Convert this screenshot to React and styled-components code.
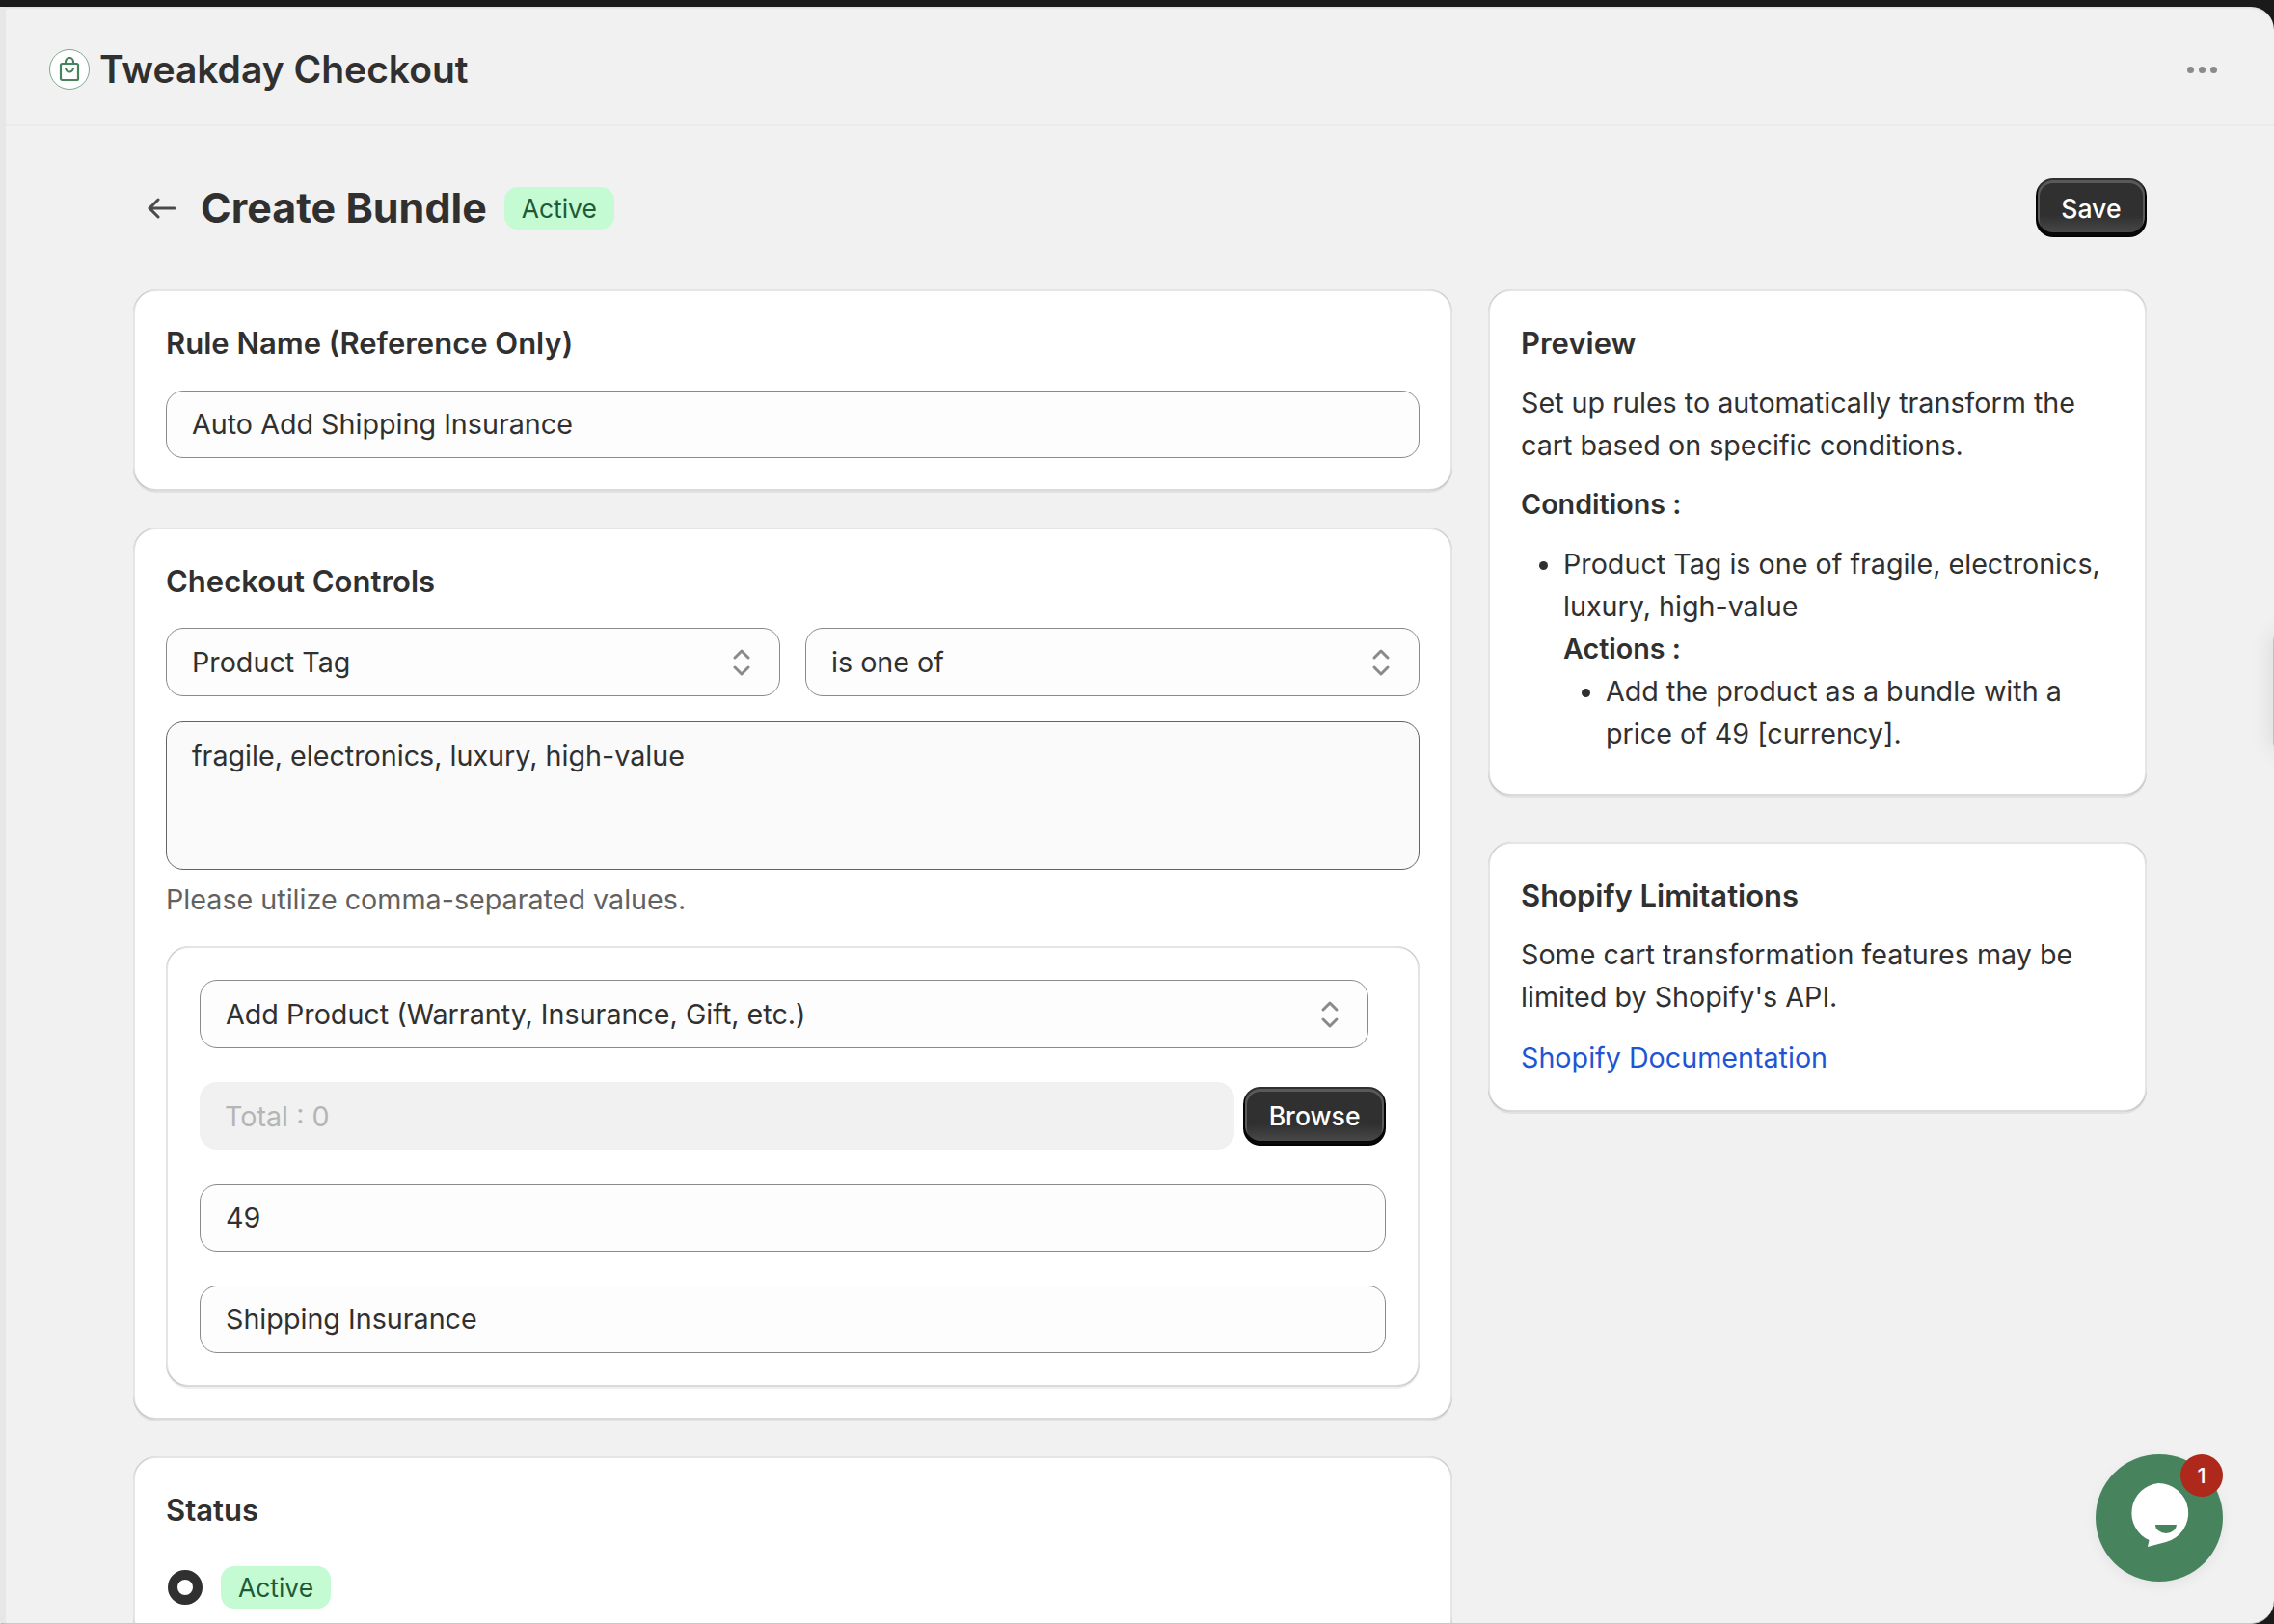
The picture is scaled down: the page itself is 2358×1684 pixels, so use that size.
import React from "react";
import styled, { createGlobalStyle } from "styled-components";

const GlobalStyle = createGlobalStyle`
  html, body {
    margin: 0;
    height: 100%;
    overflow: hidden;
    background: #1a1a1a;
  }
  #root {
    height: 100%;
  }
`;

const Frame = styled.div`
  height: 100vh;
  box-sizing: border-box;
  padding-top: 7px;
  display: flex;
  flex-direction: column;
  font-family: "Inter", "Liberation Sans", sans-serif;
  color: #303030;
`;

const AppWindow = styled.div`
  position: relative;
  flex: 1;
  min-height: 0;
  overflow: hidden;
  background: #f1f1f1;
  border-radius: 0 24px 24px 0;
  border-left: 6px solid #e7e7e7;
  border-bottom: 1px solid #c9c9c9;
  box-shadow: inset 0 3px 3px -2px rgba(0, 0, 0, 0.1);
`;

const TopBar = styled.header`
  height: 124px;
  box-sizing: border-box;
  padding: 8px 59px 0 45px;
  display: flex;
  align-items: center;
  justify-content: space-between;
  border-bottom: 2px solid #ebebeb;
`;

const Brand = styled.div`
  display: flex;
  align-items: center;
  gap: 10px;
`;

const BrandName = styled.h1`
  margin: 0;
  font-size: 39px;
  line-height: 48px;
  font-weight: 600;
`;

const LogoCircle = styled.div`
  width: 42px;
  height: 42px;
  box-sizing: border-box;
  border-radius: 50%;
  background: #ffffff;
  border: 1px solid #7fa98f;
  display: flex;
  align-items: center;
  justify-content: center;
`;

const Dots = styled.div`
  display: flex;
  gap: 5px;
`;

const Dot = styled.span`
  width: 7px;
  height: 7px;
  border-radius: 50%;
  background: #8a8a8a;
`;

const Page = styled.main`
  width: 2088px;
  margin-left: 132px;
`;

const PageHeader = styled.div`
  height: 169px;
  display: flex;
  align-items: center;
  justify-content: space-between;
`;

const TitleGroup = styled.div`
  display: flex;
  align-items: center;
  margin-left: 15px;
`;

const BackArrow = styled.svg`
  width: 30px;
  height: 30px;
  margin-right: 25px;
`;

const PageTitle = styled.h2`
  margin: 0 18px 2px 0;
  font-size: 43px;
  line-height: 56px;
  font-weight: 700;
`;

const Badge = styled.span`
  display: inline-flex;
  align-items: center;
  height: 44px;
  padding: 0 18px;
  border-radius: 14px;
  background: #c5fbd3;
  color: #1f5a37;
  font-size: 26.4px;
  font-weight: 400;
`;

const DarkButton = styled.button`
  height: 61px;
  padding: 0 26.5px;
  border: none;
  border-radius: 18px;
  font-family: inherit;
  font-size: 26.6px;
  font-weight: 500;
  color: #ffffff;
  background: linear-gradient(180deg, rgba(48, 48, 48, 0) 63%, rgba(255, 255, 255, 0.15) 100%), #303030;
  box-shadow: inset 0 -3px 0 2px rgba(0, 0, 0, 0.9), inset 0 0 0 2px #303030, inset 0 1px 0 4px rgba(255, 255, 255, 0.2);
`;

const Columns = styled.div`
  display: grid;
  grid-template-columns: 1368px 683px;
  gap: 37px;
  align-items: start;
`;

const Column = styled.div`
  display: flex;
  flex-direction: column;
  gap: ${(p) => p.$gap}px;
`;

const Card = styled.section`
  background: #ffffff;
  border-radius: 24px;
  padding: ${(p) => p.$pad || "34px"};
  box-shadow: 0 2px 0 rgba(26, 26, 26, 0.07), inset 2px 0 0 rgba(0, 0, 0, 0.1), inset -2px 0 0 rgba(0, 0, 0, 0.1), inset 0 -2px 0 rgba(0, 0, 0, 0.14), inset 0 2px 0 rgba(204, 204, 204, 0.5);
`;

const InnerCard = styled(Card)`
  margin-top: 26px;
  padding: 35px 35px 35.5px;
  display: flex;
  flex-direction: column;
  gap: 35.3px;
`;

const CardTitle = styled.h3`
  margin: 0 0 ${(p) => p.$mb ?? 26.5}px;
  font-size: 31px;
  line-height: 44px;
  font-weight: 600;
`;

const Field = styled.div`
  height: 70px;
  box-sizing: border-box;
  padding: 0 26px;
  display: flex;
  align-items: center;
  justify-content: space-between;
  font-size: 28.7px;
  border: 1.5px solid #8a8a8a;
  border-radius: 18px;
  background: #fdfdfd;
`;

const SelectRow = styled.div`
  display: grid;
  grid-template-columns: 1fr 1fr;
  gap: 26px;
`;

const SelectField = styled(Field)`
  height: 71px;
  padding-right: 29px;
  margin-right: ${(p) => p.$mr || 0}px;
`;

const TextArea = styled(Field)`
  margin-top: 26px;
  height: 154px;
  padding-top: 13px;
  align-items: flex-start;
  line-height: 44px;
  background: #fafafa;
  border-color: #646464;
`;

const HelpText = styled.p`
  margin: 9px 0 0;
  font-size: 28.7px;
  line-height: 44px;
  color: #616161;
`;

const BrowseRow = styled.div`
  display: flex;
  align-items: center;
  gap: 9px;
`;

const DisabledField = styled.div`
  flex: 1;
  height: 70px;
  box-sizing: border-box;
  padding: 0 26px;
  display: flex;
  align-items: center;
  font-size: 28.7px;
  color: #b5b5b5;
  background: #f1f1f1;
  border-radius: 18px;
`;

const StatusRow = styled.div`
  display: flex;
  align-items: center;
  gap: 19px;
  margin-left: 2px;
`;

const Radio = styled.span`
  width: 36px;
  height: 36px;
  box-sizing: border-box;
  border-radius: 50%;
  border: 10px solid #303030;
  background: #ffffff;
`;

const BodyText = styled.p`
  margin: 0 0 ${(p) => p.$mb || 0}px;
  font-size: 28.7px;
  line-height: 44px;
  font-weight: ${(p) => (p.$bold ? 620 : 400)};
`;

const BulletList = styled.ul`
  margin: 0;
  padding-left: 44px;
  font-size: 28.7px;
  line-height: 44px;
  list-style: disc;
`;

const DocLink = styled.a`
  display: block;
  margin-top: 19px;
  font-size: 28.7px;
  line-height: 44px;
  color: #1f55d3;
  text-decoration: none;
`;

const ChatButton = styled.div`
  position: absolute;
  right: 53px;
  bottom: 43px;
  width: 132px;
  height: 132px;
  border-radius: 50%;
  background: #47845e;
  display: flex;
  align-items: center;
  justify-content: center;
  box-shadow: 0 4px 14px rgba(0, 0, 0, 0.06);
`;

const ChatCount = styled.span`
  position: absolute;
  top: 0;
  right: 0;
  width: 44px;
  height: 44px;
  border-radius: 50%;
  background: #ae281c;
  color: #ffffff;
  font-size: 22px;
  font-weight: 500;
  display: flex;
  align-items: center;
  justify-content: center;
`;

const EdgeGlow = styled.div`
  position: absolute;
  right: -19px;
  top: 648px;
  width: 20px;
  height: 125px;
  border-radius: 14px;
  background: rgba(0, 0, 0, 0.2);
  box-shadow: 0 0 24px rgba(0, 0, 0, 0.12);
`;

const Chevrons = () => (
  <svg width="20" height="30" viewBox="0 0 20 30" fill="none" stroke="#8a8a8a" strokeWidth="3" strokeLinecap="round" strokeLinejoin="round">
    <path d="M3 10 L10 3 L17 10" />
    <path d="M3 20 L10 27 L17 20" />
  </svg>
);

export default function App() {
  return (
    <>
      <GlobalStyle />
      <Frame>
        <AppWindow>
          <TopBar>
            <Brand>
              <LogoCircle>
                <svg width="22" height="26" viewBox="0 0 22 26" fill="none" stroke="#47845e" strokeWidth="2.2">
                  <rect x="2" y="7" width="18" height="17" rx="1.5" />
                  <path d="M7 7 V5 a4 4 0 0 1 8 0 V7" />
                  <path d="M7 11 a4 4.5 0 0 0 8 0" />
                </svg>
              </LogoCircle>
              <BrandName>Tweakday Checkout</BrandName>
            </Brand>
            <Dots>
              <Dot />
              <Dot />
              <Dot />
            </Dots>
          </TopBar>
          <Page>
            <PageHeader>
              <TitleGroup>
                <BackArrow viewBox="0 0 30 30" fill="none" stroke="#4a4a4a" strokeWidth="3" strokeLinecap="round" strokeLinejoin="round">
                  <path d="M28 15 H2 M11 6 L2 15 L11 24" />
                </BackArrow>
                <PageTitle>Create Bundle</PageTitle>
                <Badge>Active</Badge>
              </TitleGroup>
              <DarkButton>Save</DarkButton>
            </PageHeader>
            <Columns>
              <Column $gap={38}>
                <Card>
                  <CardTitle>Rule Name (Reference Only)</CardTitle>
                  <Field>Auto Add Shipping Insurance</Field>
                </Card>
                <Card>
                  <CardTitle>Checkout Controls</CardTitle>
                  <SelectRow>
                    <SelectField>Product Tag<Chevrons /></SelectField>
                    <SelectField>is one of<Chevrons /></SelectField>
                  </SelectRow>
                  <TextArea>fragile, electronics, luxury, high-value</TextArea>
                  <HelpText>Please utilize comma-separated values.</HelpText>
                  <InnerCard>
                    <SelectField $mr={18}>Add Product (Warranty, Insurance, Gift, etc.)<Chevrons /></SelectField>
                    <BrowseRow>
                      <DisabledField>Total : 0</DisabledField>
                      <DarkButton>Browse</DarkButton>
                    </BrowseRow>
                    <Field>49</Field>
                    <Field>Shipping Insurance</Field>
                  </InnerCard>
                </Card>
                <Card>
                  <CardTitle $mb={36}>Status</CardTitle>
                  <StatusRow>
                    <Radio />
                    <Badge>Active</Badge>
                  </StatusRow>
                </Card>
              </Column>
              <Column $gap={48}>
                <Card $pad="34px 34px 42px">
                  <CardTitle $mb={18}>Preview</CardTitle>
                  <BodyText $mb={17}>Set up rules to automatically transform the cart based on specific conditions.</BodyText>
                  <BodyText $bold $mb={18}>Conditions :</BodyText>
                  <BulletList>
                    <li>
                      Product Tag is one of fragile, electronics, luxury, high-value
                      <BodyText $bold>Actions :</BodyText>
                      <BulletList>
                        <li>Add the product as a bundle with a price of 49 [currency].</li>
                      </BulletList>
                    </li>
                  </BulletList>
                </Card>
                <Card>
                  <CardTitle $mb={17}>Shopify Limitations</CardTitle>
                  <BodyText>Some cart transformation features may be limited by Shopify's API.</BodyText>
                  <DocLink href="#">Shopify Documentation</DocLink>
                </Card>
              </Column>
            </Columns>
          </Page>
          <EdgeGlow />
          <ChatButton>
            <svg width="76" height="80" viewBox="1 1 76 76">
              <path fill="#ffffff" d="M38 3 a31 31 0 0 1 8 61 L27 69 l1.5 -7 A31 31 0 0 1 38 3 Z" />
              <path fill="#47845e" d="M35 46 H57 A11 9 0 0 1 35 46 Z" />
            </svg>
            <ChatCount>1</ChatCount>
          </ChatButton>
        </AppWindow>
      </Frame>
    </>
  );
}
